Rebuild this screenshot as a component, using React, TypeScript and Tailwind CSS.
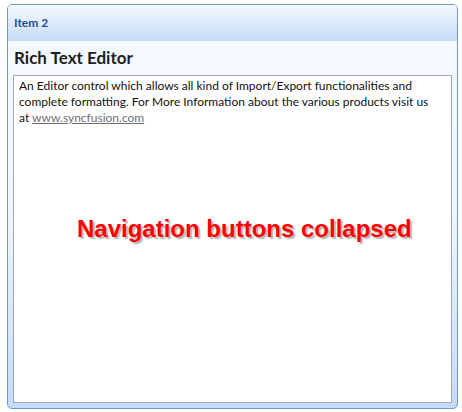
import React from "react";

const App: React.FC = () => {
  return (
    <div className="w-[462px] h-[412px] bg-white pt-[4px] pl-[7px]">
      <div className="w-[451px] h-[405px] border border-[#6f98d1] rounded-[5px] overflow-hidden flex flex-col bg-gradient-to-b from-[#f5faff] via-[#f0f6ff] to-[#c5dbf9]">
        <div className="h-[36px] shrink-0 flex items-center pl-[6px] bg-gradient-to-b from-[#f6faff] to-[#c6dbf8] font-['Lato',sans-serif] text-[12px] font-bold text-[#1d4f96]">
          Item 2
        </div>
        <div className="flex-1 flex flex-col px-[5px] pb-[5px]">
          <div className="h-[34px] flex items-center pl-[1px] font-['Lato',sans-serif] text-[17px] font-bold text-[#1e1e1e]">
            Rich Text Editor
          </div>
          <div className="relative flex-1 bg-white border border-[#a7a7a7] px-[5px] pt-[2px] font-['Lato',sans-serif] text-[12px] leading-[16px] text-[#111]">
            <p className="whitespace-nowrap">
              An Editor control which allows all kind of Import/Export functionalities and
              <br />
              complete formatting. For More Information about the various products visit us
              <br />
              at{" "}
              <a href="#" className="underline text-[#707070]">
                www.syncfusion.com
              </a>
            </p>
            <div className="absolute left-[63px] top-[145px] whitespace-nowrap font-['Liberation_Sans',Arial,sans-serif] text-[24px] font-bold text-[#ff0000] [text-shadow:2px_2px_1px_#b8b8b8]">
              Navigation buttons collapsed
            </div>
          </div>
        </div>
      </div>
    </div>
  );
};

export default App;
